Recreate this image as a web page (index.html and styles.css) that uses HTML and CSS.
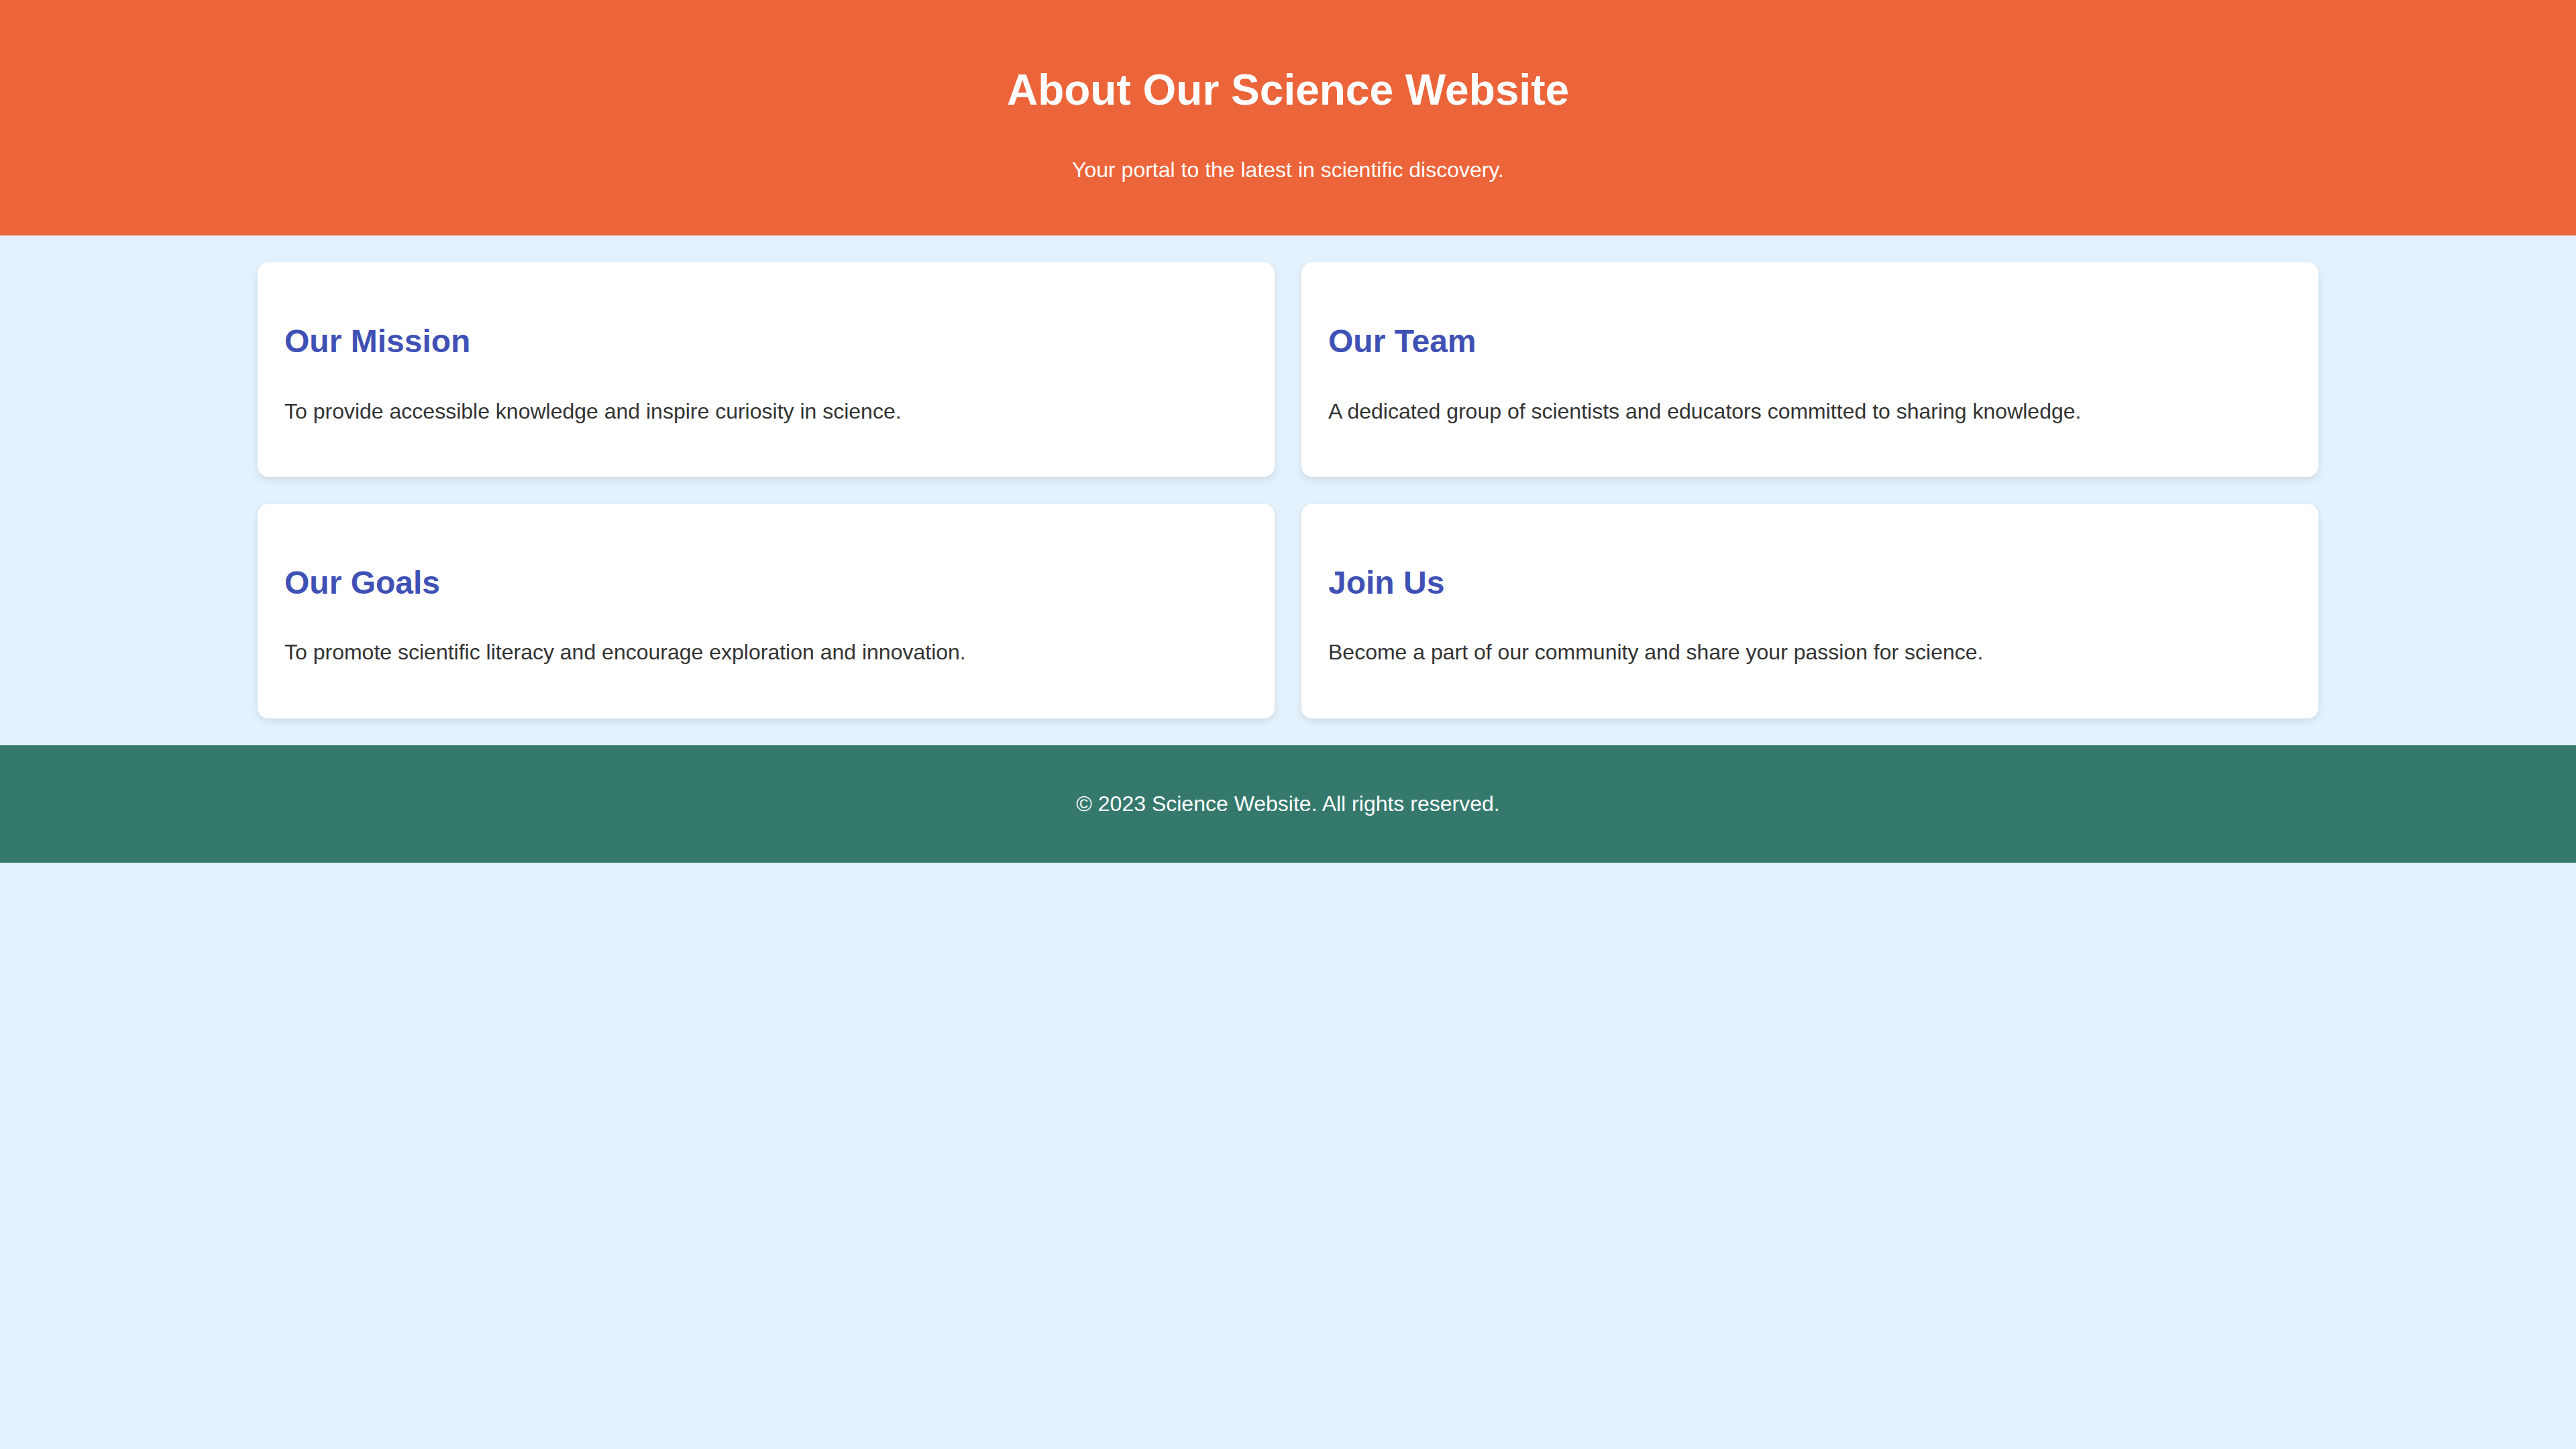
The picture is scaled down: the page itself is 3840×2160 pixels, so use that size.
FILE: index.html
```html
<!DOCTYPE html>
<html lang="en">
<head>
<meta charset="UTF-8">
<title>About Our Science Website</title>
<link rel="stylesheet" href="styles.css">
</head>
<body>
<header class="site-header">
  <h1 class="site-title">About Our Science Website</h1>
  <p class="site-tagline">Your portal to the latest in scientific discovery.</p>
</header>
<main class="content">
  <section class="card">
    <h2 class="card-title">Our Mission</h2>
    <p class="card-text">To provide accessible knowledge and inspire curiosity in science.</p>
  </section>
  <section class="card">
    <h2 class="card-title">Our Team</h2>
    <p class="card-text">A dedicated group of scientists and educators committed to sharing knowledge.</p>
  </section>
  <section class="card">
    <h2 class="card-title">Our Goals</h2>
    <p class="card-text">To promote scientific literacy and encourage exploration and innovation.</p>
  </section>
  <section class="card">
    <h2 class="card-title">Join Us</h2>
    <p class="card-text">Become a part of our community and share your passion for science.</p>
  </section>
</main>
<footer class="site-footer">
  <p class="footer-text">&copy; 2023 Science Website. All rights reserved.</p>
</footer>
</body>
</html>
```

FILE: styles.css
```css
html, body {
  margin: 0;
  padding: 0;
}

body {
  font-family: "Liberation Sans", Arial, sans-serif;
  font-size: 32px;
  line-height: 1.6;
  color: #333333;
  background: #e3f2fd;
  min-height: 2160px;
}

.site-header {
  background: #ec6439;
  color: #ffffff;
  text-align: center;
  padding: 40px;
}

.site-title {
  font-size: 64px;
  font-weight: bold;
  margin: 42.88px 0;
}

.site-tagline {
  font-size: 32px;
  margin: 32px 0;
}

.content {
  width: 3072px;
  margin: 0 auto;
  padding: 40px 0;
  display: grid;
  grid-template-columns: 1fr 1fr;
  gap: 40px;
}

.card {
  background: #ffffff;
  border-radius: 16px;
  padding: 40px;
  box-shadow: 0 4px 12px rgba(0, 0, 0, 0.1);
}

.card-title {
  font-size: 48px;
  font-weight: bold;
  color: #3f51b5;
  margin: 39.84px 0;
}

.card-text {
  margin: 32px 0;
}

.site-footer {
  background: #35796d;
  color: #ffffff;
  text-align: center;
  padding: 30px;
}

.footer-text {
  margin: 32px 0;
}
```
